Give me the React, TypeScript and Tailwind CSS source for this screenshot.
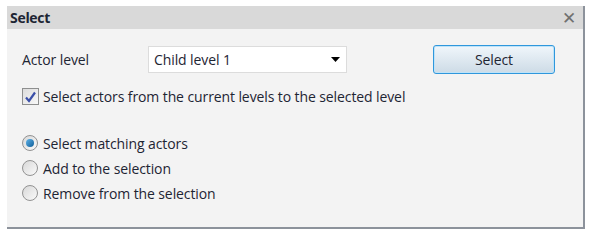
import React from "react";

export default function App() {
  const font = { fontFamily: '"Open Sans", "Noto Sans", sans-serif' };
  return (
    <div className="w-[591px] h-[235px] bg-white pt-[6px] pl-[7px]" style={font}>
      <div className="w-[578px] h-[223px] flex flex-col bg-[#f3f3f3] border-r-[2px] border-b-[2px] border-[#8c929b]">
        <div className="h-[23px] bg-[#d9d9d9] flex items-center justify-between pl-[3px] pr-[7px]">
          <span className="text-[14px] font-bold text-[#1d2533] tracking-[-0.3px]">Select</span>
          <span className="text-[#707070] text-[17px] leading-none">✕</span>
        </div>
        <div className="flex flex-col pl-[15px] pr-[28px]">
          <div className="flex items-center mt-[16px] h-[29px]">
            <span className="w-[126px] text-[14px] tracking-[-0.1px] text-[#1e2533]">Actor level</span>
            <div className="w-[199px] h-[27px] bg-white border border-[#dcdcdc] flex items-center justify-between pl-[5px] pr-[6px]">
              <span className="text-[14px] tracking-[-0.1px] text-[#1e2533]">Child level 1</span>
              <svg width="9" height="5" viewBox="0 0 9 5"><path d="M0 0 L9 0 L4.5 5 Z" fill="#000" /></svg>
            </div>
            <div className="ml-auto w-[122px] h-[29px] rounded-[3px] border-[1.5px] border-[#2f97dc] bg-gradient-to-b from-[#f0f6fb] to-[#cddbe6] shadow-[inset_0_0_0_1px_#bfe3f8] flex items-center justify-center">
              <span className="text-[14px] tracking-[-0.1px] text-[#1e2533]">Select</span>
            </div>
          </div>
          <div className="flex items-center mt-[14px] h-[17px]">
            <div className="w-[17px] h-[17px] border border-[#8e8f8f] bg-gradient-to-br from-[#dcdcdc] to-[#f8f8f8] flex items-center justify-center">
              <svg width="13" height="12" viewBox="0 0 13 12"><path d="M2 6.5 L5 10 L11 1.5" stroke="#3a4fa8" strokeWidth="2.2" fill="none" /></svg>
            </div>
            <span className="ml-[4px] text-[14px] tracking-[-0.1px] text-[#1e2533]">Select actors from the current levels to the selected level</span>
          </div>
          <div className="flex flex-col mt-[30px] gap-[9px]">
            {[
              ["Select matching actors", true],
              ["Add to the selection", false],
              ["Remove from the selection", false],
            ].map(([label, on]) => (
              <div key={label as string} className="flex items-center h-[16px]">
                <div className="w-[16px] h-[16px] rounded-full border border-[#929292] bg-gradient-to-br from-[#d8d8d8] to-[#fafafa] flex items-center justify-center">
                  {on ? (
                    <div className="w-[8px] h-[8px] rounded-full bg-gradient-to-br from-[#5db4ea] to-[#0b5d97]" />
                  ) : null}
                </div>
                <span className="ml-[5px] text-[14px] tracking-[-0.1px] text-[#1e2533]">{label as string}</span>
              </div>
            ))}
          </div>
        </div>
      </div>
    </div>
  );
}
